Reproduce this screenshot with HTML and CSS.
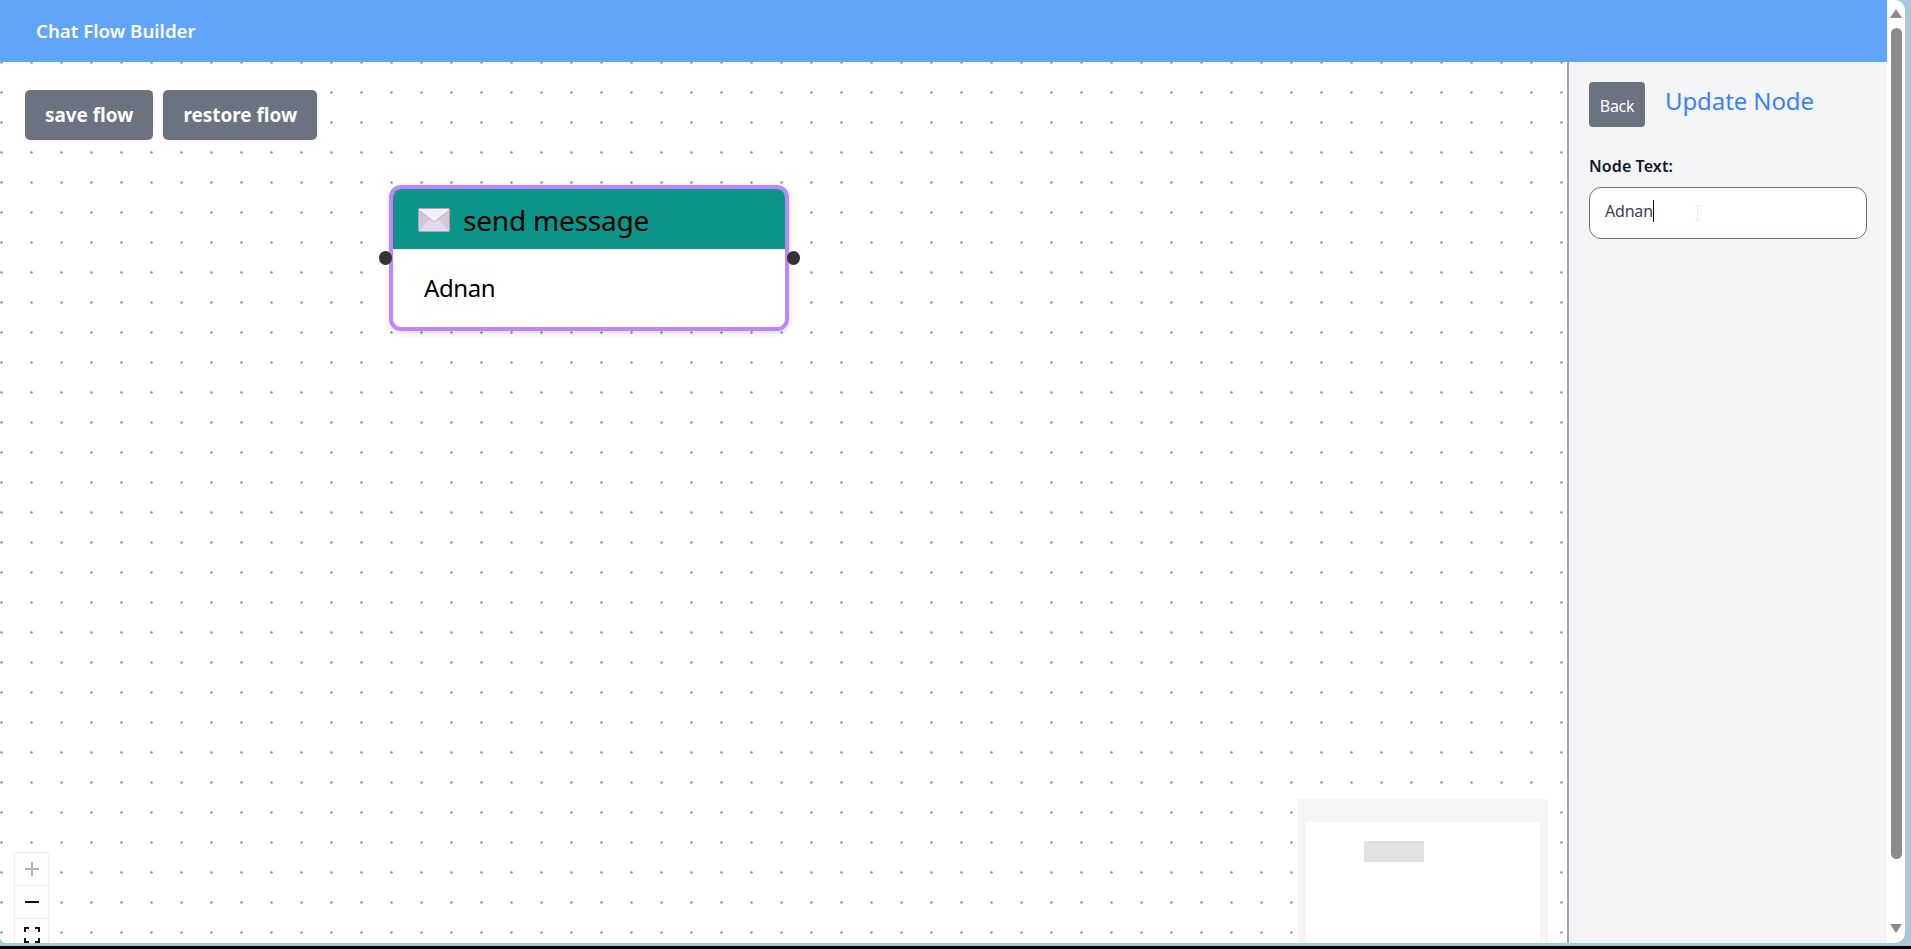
FILE: index.html
```html
<!DOCTYPE html>
<html lang="en">
<head>
  <meta charset="UTF-8" />
  <meta name="viewport" content="width=device-width, initial-scale=1.0"/>
  <title>Chat Flow Builder</title>
  <link rel="stylesheet" href="styles.css">
</head>
<body>

  <div class="window">
    <div class="app">
      <header class="topbar">Chat Flow Builder</header>

      <div class="workspace">
        <!-- Canvas -->
        <main class="canvas">
          <div class="toolbar">
            <button class="btn-flow">save flow</button>
            <button class="btn-flow">restore flow</button>
          </div>

          <div class="node">
            <span class="handle handle-left"></span>
            <span class="handle handle-right"></span>
            <div class="node-box">
              <div class="node-head">
                <svg class="mail-icon" viewBox="0 0 32 24" width="32" height="24">
                  <rect x="0.5" y="0.5" width="31" height="23" rx="1" fill="#e3daec" stroke="#afa5ba"/>
                  <path d="M1 3v20l11-12zM31 3v20L20 11z" fill="#d2c8da"/>
                  <path d="M1 1h30v1.5L16 14 1 2.5z" fill="#f4eff9"/>
                  <path d="M1 2.5L16 14 31 2.5" fill="none" stroke="#b9aec5" stroke-width="1"/>
                </svg>
                <span>send message</span>
              </div>
              <div class="node-body">Adnan</div>
            </div>
          </div>

          <div class="zoom-controls">
            <button class="zoom-btn">
              <svg viewBox="0 0 16 16" width="16" height="16"><path d="M8 1v14M1 8h14" stroke="#b4b4b4" stroke-width="2"/></svg>
            </button>
            <button class="zoom-btn">
              <svg viewBox="0 0 16 16" width="16" height="16"><path d="M1 8h14" stroke="#111" stroke-width="2"/></svg>
            </button>
            <button class="zoom-btn">
              <svg viewBox="0 0 16 16" width="16" height="16"><path d="M1 5V1h4M11 1h4v4M15 11v4h-4M5 15H1v-4" fill="none" stroke="#111" stroke-width="2"/></svg>
            </button>
          </div>

          <div class="minimap">
            <div class="minimap-view">
              <div class="minimap-node"></div>
            </div>
          </div>
        </main>

        <!-- Sidebar -->
        <aside class="sidebar">
          <div class="sidebar-head">
            <button class="btn-back">Back</button>
            <h2>Update Node</h2>
          </div>
          <label class="field-label">Node Text:</label>
          <div class="field">
            <span>Adnan</span><span class="caret"></span>
            <svg class="ibeam" viewBox="0 0 7 16" width="7" height="16"><path d="M1 .5h5M1 15.5h5M3.5 .5v15" fill="none" stroke="#ececec"/></svg>
          </div>
        </aside>
      </div>
    </div>

    <div class="scrollbar">
      <span class="arrow-up"></span>
      <div class="thumb"></div>
      <span class="arrow-down"></span>
    </div>
  </div>

  <div class="bottom-edge"></div>

</body>
</html>
```

FILE: styles.css
```css
* {
  box-sizing: border-box;
}

html, body {
  height: 100%;
  margin: 0;
  overflow: hidden;
}

body {
  background-color: #a5c8de;
  font-family: 'Noto Sans', 'Open Sans', sans-serif;
  display: flex;
  flex-direction: column;
}

button {
  font-family: inherit;
  border: none;
  cursor: pointer;
}

.window {
  flex: 1;
  min-height: 0;
  display: flex;
  margin-right: 6px;
  margin-bottom: 3px;
}

.bottom-edge {
  height: 3px;
  background-color: #000;
}

.app {
  flex: 1;
  min-width: 0;
  display: flex;
  flex-direction: column;
  overflow: hidden;
  border-bottom-left-radius: 6px;
}

.topbar {
  height: 62px;
  flex: none;
  padding: 0 36px;
  line-height: 62px;
  font-size: 18.7px;
  font-weight: 600;
  color: #fff;
  background-color: #60a5fa;
}

.workspace {
  flex: 1;
  min-height: 0;
  display: flex;
}

.canvas {
  flex: 1;
  position: relative;
  overflow: hidden;
  padding: 28px 25px;
  background-color: #fff;
  background-image: radial-gradient(circle at 1.5px 1.5px, #8f8f98 0.8px, transparent 1.6px);
  background-size: 30px 30px;
  background-position: 0 -1px;
}

.toolbar {
  display: flex;
  gap: 10px;
}

.btn-flow {
  height: 50px;
  padding: 0 20px;
  font-size: 18.9px;
  font-weight: 700;
  color: #fff;
  background-color: #6b7280;
  border-radius: 5px;
}

.node {
  position: absolute;
  left: 389px;
  top: 123px;
  width: 400px;
  height: 146px;
}

.node-box {
  position: relative;
  height: 100%;
  border: 4px solid #c084fc;
  border-radius: 12px;
  background-color: #fff;
  overflow: hidden;
  box-shadow: 0 2px 6px rgba(0, 0, 0, 0.15);
}

.node-head {
  height: 60px;
  display: flex;
  align-items: center;
  gap: 13px;
  padding-left: 25px;
  font-size: 28px;
  color: #000;
  background-color: #0d9488;
  letter-spacing: -0.2px;
}

.node-head span {
  padding-top: 2px;
}

.mail-icon {
  flex: none;
  margin-top: 2px;
}

.node-body {
  padding: 23px 31px;
  font-size: 24px;
  line-height: 32px;
  color: #000;
  letter-spacing: -0.4px;
}

.handle {
  position: absolute;
  z-index: 1;
  top: 66px;
  width: 13px;
  height: 14px;
  border-radius: 50%;
  background-color: #333;
}

.handle-left {
  left: -10px;
}

.handle-right {
  right: -11px;
}

.zoom-controls {
  position: absolute;
  left: 15px;
  top: 791px;
  width: 33px;
  background-color: #fefefe;
  box-shadow: 0 0 2px rgba(0, 0, 0, 0.2);
}

.zoom-btn {
  display: flex;
  align-items: center;
  justify-content: center;
  width: 100%;
  height: 33px;
  padding: 0;
  background-color: #fefefe;
  border-bottom: 1px solid #eee;
}

.minimap {
  position: absolute;
  left: 1298px;
  top: 737px;
  width: 250px;
  height: 180px;
  padding: 23px 8px 0;
  background-color: #f5f5f5;
}

.minimap-view {
  height: 100%;
  padding: 19px 0 0 58px;
  background-color: #fff;
}

.minimap-node {
  width: 60px;
  height: 21px;
  background-color: #e2e2e2;
}

.sidebar {
  width: 320px;
  flex: none;
  padding: 20px 20px 0 20px;
  background-color: #f3f4f6;
  border-left: 2px solid #9ca3af;
}

.sidebar-head {
  display: flex;
  align-items: flex-start;
  gap: 20px;
  margin-bottom: 27px;
}

.sidebar-head h2 {
  margin: 0;
  font-size: 24px;
  font-weight: 400;
  line-height: 32px;
  padding-top: 3px;
  color: #3b82f6;
  letter-spacing: -0.1px;
}

.btn-back {
  width: 56px;
  height: 45px;
  padding: 2px 0 0;
  font-size: 16px;
  color: #fff;
  background-color: #6b7280;
  border-radius: 4px;
  letter-spacing: -0.3px;
}

.field-label {
  display: block;
  margin-bottom: 9px;
  font-size: 16px;
  font-weight: 600;
  line-height: 24px;
  color: #111827;
  letter-spacing: 0.1px;
}

.field {
  position: relative;
  width: 278px;
  height: 52px;
  display: flex;
  align-items: center;
  padding: 0 15px 4px;
  font-size: 16px;
  color: #374151;
  background-color: #fff;
  border: 1px solid #6b7280;
  border-radius: 12px;
  letter-spacing: -0.2px;
}

.caret {
  width: 1px;
  height: 22px;
  background-color: #111;
}

.ibeam {
  position: absolute;
  left: 104px;
  top: 17px;
}

.scrollbar {
  width: 18px;
  flex: none;
  display: flex;
  flex-direction: column;
  align-items: center;
  padding-top: 9px;
  background-color: #fff;
  border-radius: 0 10px 10px 0;
}

.arrow-up {
  width: 0;
  height: 0;
  border-left: 6.5px solid transparent;
  border-right: 6.5px solid transparent;
  border-bottom: 9px solid #8b8b8b;
}

.arrow-down {
  width: 0;
  height: 0;
  border-left: 6.5px solid transparent;
  border-right: 6.5px solid transparent;
  border-top: 9px solid #8b8b8b;
  margin-top: 65px;
}

.thumb {
  width: 11px;
  height: 831px;
  margin-top: 10px;
  background-color: #8b8b8b;
  border-radius: 6px;
}
```
